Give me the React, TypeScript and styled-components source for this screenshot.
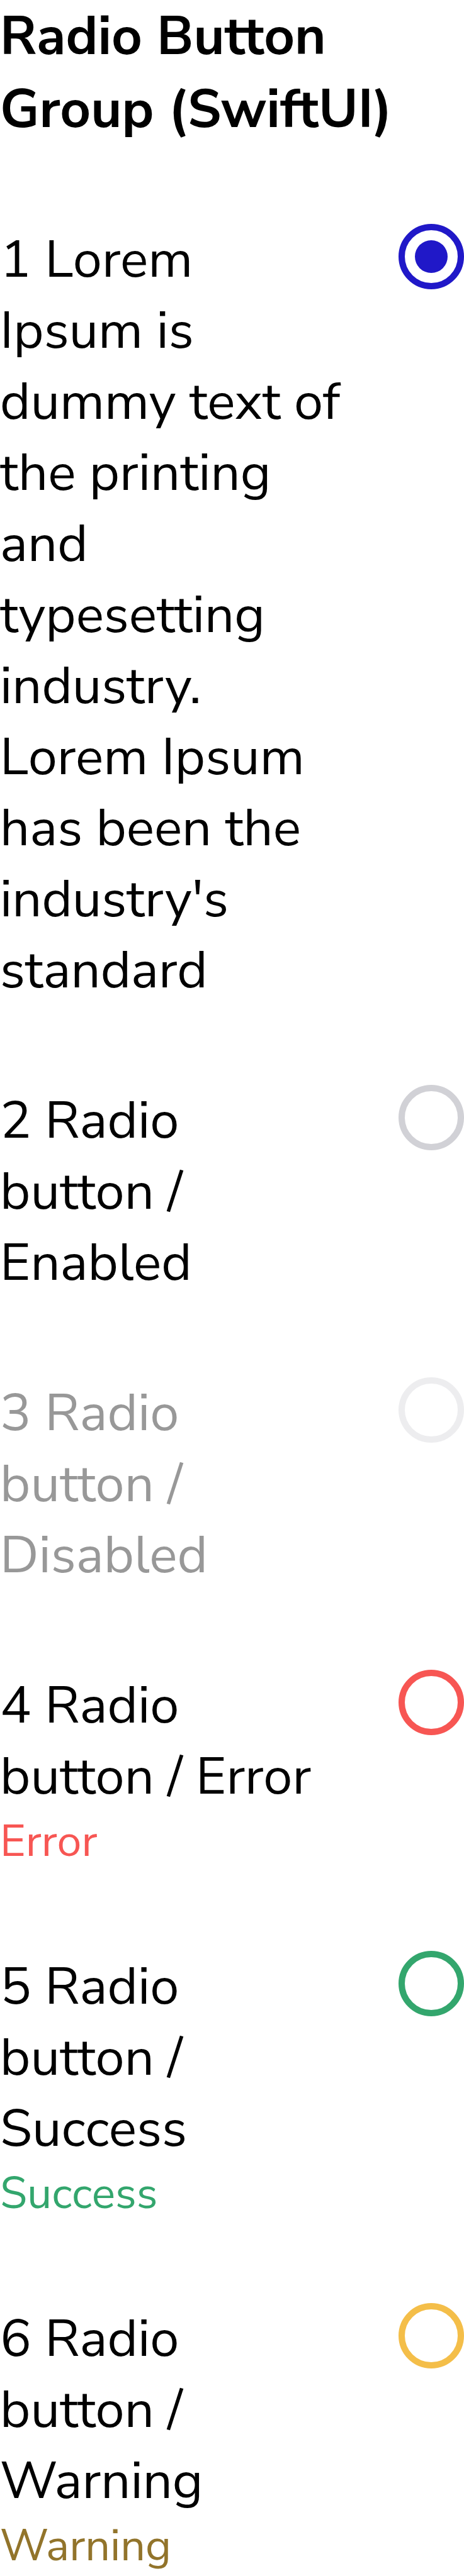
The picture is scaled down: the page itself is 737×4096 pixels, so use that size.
import React, { useState } from "react";
import styled, { createGlobalStyle } from "styled-components";

const GlobalStyle = createGlobalStyle`
  body {
    margin: 0;
    background: #ffffff;
    color: #000000;
    font-family: "Nunito Sans", Nunito, "Open Sans", sans-serif;
  }
`;

type Status = "default" | "error" | "success" | "warning";

const ringColors: Record<Status, string> = {
  default: "#d1d1d6",
  error: "#f75653",
  success: "#33a66d",
  warning: "#f4be49",
};

const hintColors: Record<Status, string> = {
  default: "#000000",
  error: "#f75653",
  success: "#33a66d",
  warning: "#92742b",
};

const Page = styled.main`
  display: flex;
  flex-direction: column;
  gap: 124px;
`;

const Title = styled.h1`
  margin: 0;
  font-size: 85px;
  line-height: 116px;
  font-weight: 700;
`;

const Options = styled.div`
  display: flex;
  flex-direction: column;
  gap: 126px;
`;

const Option = styled.div<{ $disabled: boolean }>`
  display: grid;
  grid-template-columns: minmax(0, 1fr) 104px;
  column-gap: 90px;
  align-items: start;
  opacity: ${(p) => (p.$disabled ? 0.4 : 1)};
`;

const OptionText = styled.div`
  display: flex;
  flex-direction: column;
`;

const Label = styled.label`
  font-size: 83px;
  line-height: 113px;
`;

const Hint = styled.span<{ $status: Status }>`
  font-size: 70px;
  line-height: 95px;
  color: ${(p) => hintColors[p.$status]};
`;

const Radio = styled.input<{ $status: Status }>`
  appearance: none;
  display: grid;
  place-items: center;
  box-sizing: border-box;
  width: 104px;
  height: 104px;
  margin: 0;
  border: 10px solid ${(p) => ringColors[p.$status]};
  border-radius: 50%;

  &:checked {
    border-color: #2018c8;
  }

  &:checked::before {
    content: "";
    width: 52px;
    height: 52px;
    border-radius: 50%;
    background: #2018c8;
  }
`;

interface Item {
  id: string;
  label: string;
  status: Status;
  hint?: string;
  disabled?: boolean;
}

const items: Item[] = [
  {
    id: "option-1",
    label:
      "1 Lorem Ipsum is dummy text of the printing and typesetting industry. Lorem Ipsum has been the industry's standard",
    status: "default",
  },
  { id: "option-2", label: "2 Radio button / Enabled", status: "default" },
  { id: "option-3", label: "3 Radio button / Disabled", status: "default", disabled: true },
  { id: "option-4", label: "4 Radio button / Error", status: "error", hint: "Error" },
  { id: "option-5", label: "5 Radio button / Success", status: "success", hint: "Success" },
  { id: "option-6", label: "6 Radio button / Warning", status: "warning", hint: "Warning" },
];

export default function App() {
  const [selected, setSelected] = useState("option-1");

  return (
    <>
      <GlobalStyle />
      <Page>
        <Title id="group-title">Radio Button Group (SwiftUI)</Title>
        <Options role="radiogroup" aria-labelledby="group-title">
          {items.map(({ id, label, status, hint, disabled = false }) => (
            <Option key={id} $disabled={disabled}>
              <OptionText>
                <Label htmlFor={id}>{label}</Label>
                {hint && (
                  <Hint id={`${id}-hint`} $status={status}>
                    {hint}
                  </Hint>
                )}
              </OptionText>
              <Radio
                type="radio"
                id={id}
                name="radio-group"
                value={id}
                checked={selected === id}
                onChange={() => setSelected(id)}
                disabled={disabled}
                aria-describedby={hint ? `${id}-hint` : undefined}
                $status={status}
              />
            </Option>
          ))}
        </Options>
      </Page>
    </>
  );
}
